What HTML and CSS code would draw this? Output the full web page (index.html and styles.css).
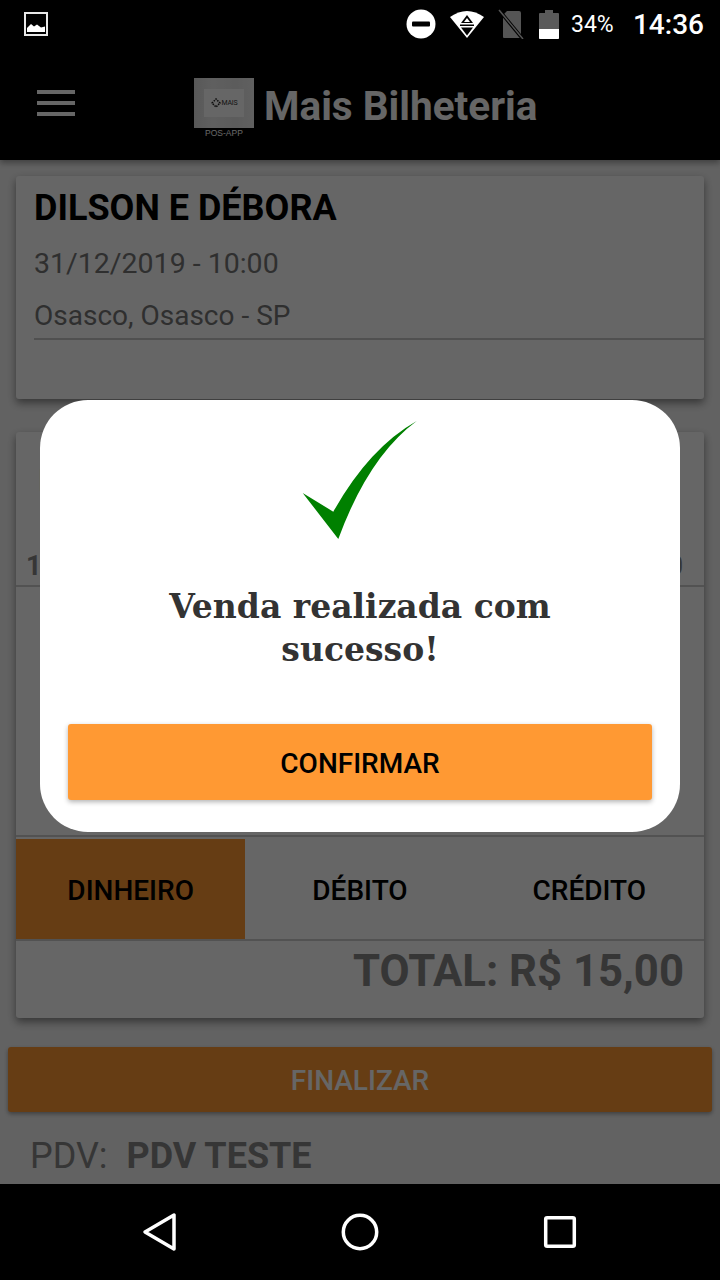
FILE: index.html
```html
<!DOCTYPE html>
<html lang="pt-BR">
<head>
<meta charset="utf-8">
<title>Mais Bilheteria</title>
<link rel="stylesheet" href="styles.css">
</head>
<body>
<div class="app">
  <div class="status">
    <svg class="st-img" width="24" height="24" viewBox="0 0 24 24"><rect x="1" y="1" width="22" height="22" fill="none" stroke="#e8e8e8" stroke-width="2"/><path d="M3 20v-4l4-4 3 2.500 3-2 4 3 4-1v5.500z" fill="#fff"/></svg>
    <div class="st-right">
      <svg width="30" height="30" viewBox="0 0 30 30"><circle cx="15" cy="15" r="14.500" fill="#fff"/><rect x="6" y="12.500" width="18" height="5" rx="1" fill="#000"/></svg>
      <svg class="st-wifi" width="36" height="30" viewBox="0 0 36 30"><path d="M18 29L1 8Q18-4 35 8z" fill="#fff"/><path d="M18 6l6 8H12z M18 9l-3 4h6z" fill="#000" fill-rule="evenodd"/><path d="M11 15.500h14v1.500H11z M12 18.500h12l-6 8z" fill="#000"/></svg>
      <svg class="st-sim" width="26" height="30" viewBox="0 0 26 30"><path d="M9 2h12a2 2 0 0 1 2 2v24a1 1 0 0 1-1 1H6a1 1 0 0 1-1-1V6z" fill="#555"/><path d="M1 1L24 29" stroke="#000" stroke-width="3.500"/><path d="M1 1L25 30" stroke="#555" stroke-width="1.500"/></svg>
      <svg class="st-bat" width="20" height="30" viewBox="0 0 20 30"><path d="M6 1h8v3h5a1 1 0 0 1 1 1v24a1 1 0 0 1-1 1H1a1 1 0 0 1-1-1V5a1 1 0 0 1 1-1h5z" fill="#5a5a5a"/><path d="M0 20h20v9a1 1 0 0 1-1 1H1a1 1 0 0 1-1-1z" fill="#fff"/></svg>
      <span class="st-pct">34%</span>
      <span class="st-time">14:36</span>
    </div>
  </div>

  <header class="bar">
    <div class="burger"><i></i><i></i><i></i></div>
    <div class="brand">
      <div class="logo">
        <div class="logo-box"><div class="logo-inner"><svg width="10" height="10" viewBox="0 0 10 10"><path d="M1 5l4-4 4 4-4 4z" fill="none" stroke="#222" stroke-width="1.500" stroke-dasharray="1.500 1"/></svg><span>MAIS</span></div></div>
        <div class="logo-cap">POS-APP</div>
      </div>
      <div class="brand-name">Mais Bilheteria</div>
    </div>
  </header>

  <main class="content">
    <section class="card event">
      <h1 class="ev-title">DILSON E DÉBORA</h1>
      <p class="ev-date">31/12/2019 - 10:00</p>
      <p class="ev-place">Osasco, Osasco - SP</p>
    </section>

    <section class="card order">
      <div class="or-head">INGRESSOS</div>
      <div class="or-line"><span>1</span><span>R$ 15,00</span></div>
      <div class="or-body"></div>
      <div class="tabs">
        <div class="tab active">DINHEIRO</div>
        <div class="tab">DÉBITO</div>
        <div class="tab">CRÉDITO</div>
      </div>
      <div class="total">TOTAL: R$ 15,00</div>
    </section>

    <button class="finish">FINALIZAR</button>

    <div class="pdv"><span>PDV:</span><b>PDV TESTE</b></div>
  </main>

  <nav class="nav">
    <svg width="36" height="40" viewBox="0 0 36 40"><path d="M3 20L32 3v34z" fill="none" stroke="#fff" stroke-width="3.500" stroke-linejoin="round"/></svg>
    <svg width="40" height="40" viewBox="0 0 40 40"><circle cx="20" cy="20" r="16.700" fill="none" stroke="#fff" stroke-width="3.500"/></svg>
    <svg width="36" height="36" viewBox="0 0 36 36"><rect x="3.700" y="3.700" width="28.600" height="28.600" rx="1.500" fill="none" stroke="#fff" stroke-width="3.500"/></svg>
  </nav>

  <div class="backdrop"></div>
  <div class="modal">
    <svg class="check" width="120" height="124" viewBox="0 0 120 124"><path d="M2.700 75L33.300 93.700Q69 30 116.700 3Q68.500 38.600 38.300 121z" fill="#008000"/></svg>
    <h2 class="modal-text">Venda realizada com sucesso!</h2>
    <button class="confirm">CONFIRMAR</button>
  </div>
</div>
</body>
</html>
```
FILE: styles.css
```css
* { box-sizing: border-box; }
html, body { margin: 0; padding: 0; }
body { width: 720px; height: 1280px; overflow: hidden; font-family: Roboto, "Liberation Sans", sans-serif; background: #000; }

.app { position: relative; width: 720px; height: 1280px; display: flex; flex-direction: column; overflow: hidden; background: #f5f5f5; }

.status { position: relative; z-index: 3; height: 48px; flex: none; background: #000; display: flex; align-items: center; justify-content: space-between; padding: 0 16px 0 24px; color: #fff; }
.st-right { display: flex; align-items: center; }
.st-wifi { margin-left: 13px; }
.st-sim { margin-left: 13px; }
.st-bat { margin-left: 15px; }
.st-pct { margin-left: 12px; font-size: 23px; width: 42px; }
.st-time { margin-left: 20px; font-size: 28px; font-weight: 500; }

.bar { flex: none; height: 112px; background: #000; display: flex; align-items: flex-start; position: relative; box-shadow: 0 3px 6px rgba(0,0,0,.35); }
.burger { width: 38px; margin: 42px 0 0 37px; display: flex; flex-direction: column; gap: 7px; }
.burger i { display: block; height: 4px; background: #fff; }
.brand { display: flex; align-items: flex-start; margin: 30px 0 0 119px; }
.logo { width: 60px; }
.logo-box { width: 60px; height: 50px; background: linear-gradient(90deg, #dcdcdc, #eeeeee 30%, #e6e6e6 70%, #f0f0f0); display: flex; align-items: center; justify-content: center; }
.logo-inner { width: 40px; height: 28px; background: #fff; display: flex; align-items: center; justify-content: center; gap: 1px; }
.logo-inner span { font-size: 7px; color: #333; letter-spacing: -.2px; }
.logo-cap { font-family: "Liberation Sans", sans-serif; font-size: 8.500px; color: #fff; text-align: center; line-height: 10px; white-space: nowrap; }
.brand-name { margin: 4px 0 0 10px; font-size: 40.500px; line-height: 48px; font-weight: 700; color: #fff; white-space: nowrap; }

.content { flex: 1; min-height: 0; display: flex; flex-direction: column; overflow: hidden; }
.card { background: #fff; border-radius: 3px; margin: 0 16px; box-shadow: 0 4px 8px rgba(0,0,0,.45); flex: none; }

.event { margin-top: 16px; height: 223px; padding: 10px 0 0 18px; }
.ev-title { margin: 0; font-size: 36px; line-height: 44px; font-weight: 700; color: #000; }
.ev-date { margin: 16px 0 0; font-size: 28.500px; line-height: 36px; color: #777; }
.ev-place { margin: 16px 0 0; height: 42px; line-height: 36px; font-size: 28px; color: #777; border-bottom: 2px solid #c8c8c8; }

.order { margin-top: 33px; height: 586px; display: flex; flex-direction: column; }
.or-head { padding: 28px 0 0 22px; height: 116px; font-size: 32px; line-height: 40px; font-weight: 700; color: #888; }
.or-line { height: 39px; border-bottom: 2px solid #ccc; display: flex; justify-content: space-between; padding: 0 21px 0 10px; font-size: 27px; font-weight: 700; color: #888; line-height: 36px; }
.or-body { flex: none; height: 250px; border-bottom: 2px solid #ccc; }
.tabs { display: grid; grid-template-columns: repeat(3, 1fr); height: 102px; margin-top: 2px; border-bottom: 2px solid #ccc; flex: none; }
.tab { display: flex; align-items: center; justify-content: center; height: 100px; padding-top: 2px; font-size: 28px; font-weight: 500; color: #000; }
.tab.active { background: #f93; }
.total { flex: 1; text-align: right; padding: 6px 20px 0 0; font-size: 43.700px; line-height: 48px; font-weight: 700; color: #888; }

.finish { flex: none; display: block; margin: 29px 8px 0; height: 65px; width: 704px; border: 0; border-radius: 3px; background: #f93; color: #fff; font: 500 28px Roboto, sans-serif; box-shadow: 0 2px 4px rgba(0,0,0,.35); padding: 2px 0 0; }

.pdv { flex: none; margin: 24px 0 0 30px; display: flex; gap: 19px; font-size: 36px; line-height: 40px; color: #888; white-space: nowrap; }
.pdv b { font-weight: 700; }

.nav { position: relative; z-index: 3; flex: none; height: 96px; background: #000; display: flex; align-items: center; padding-left: 142px; gap: 0; }
.nav svg:nth-child(2) { margin-left: 162px; }
.nav svg:nth-child(3) { margin-left: 162px; }

.backdrop { position: absolute; inset: 0; z-index: 1; background: rgba(0,0,0,.6); }

.modal { position: absolute; left: 40px; top: 400px; z-index: 2; width: 640px; height: 432px; background: #fff; border-radius: 48px; display: flex; flex-direction: column; align-items: center; padding: 18px 28px 0; }
.check { flex: none; margin-left: 0; }
.modal-text { margin: 43px 0 0; width: 440px; text-align: center; font-family: "DejaVu Serif", "Liberation Serif", serif; font-size: 33px; line-height: 43px; font-weight: 700; color: #333; }
.confirm { flex: none; margin-top: 53px; width: 584px; height: 76px; border: 0; border-radius: 3px; background: #f93; color: #000; font: 500 28px Roboto, sans-serif; box-shadow: 0 2px 5px rgba(0,0,0,.3); padding: 2px 0 0; }
```
